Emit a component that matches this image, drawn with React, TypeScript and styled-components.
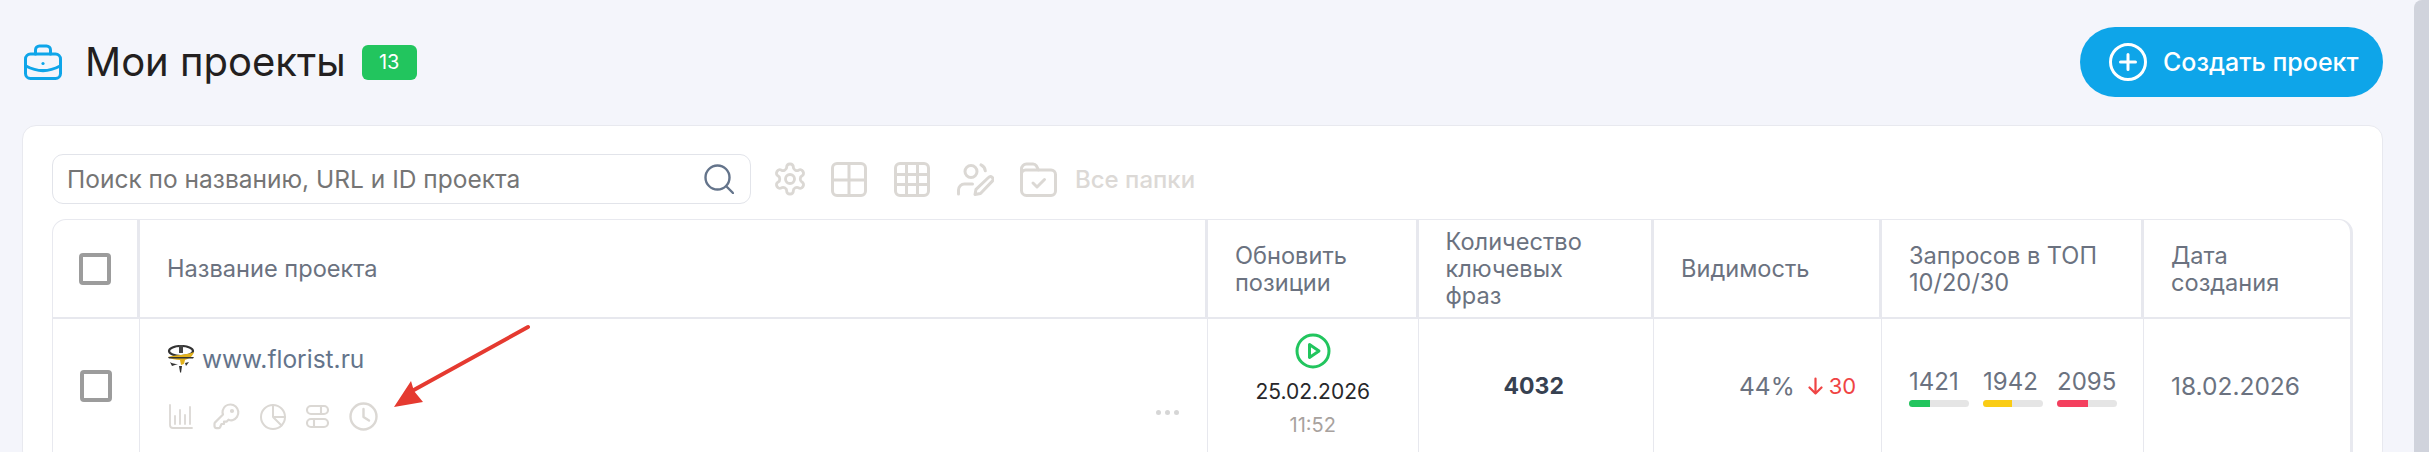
import React from "react";
import styled, { createGlobalStyle } from "styled-components";

const Global = createGlobalStyle`
  html, body { margin: 0; padding: 0; background: #f4f5fb; overflow: hidden; }
  * { box-sizing: border-box; }
  body { font-family: Inter, "Noto Sans", sans-serif; }
`;

const Page = styled.div`
  display: flex;
  width: 2429px;
  height: 452px;
  overflow: hidden;
  background: #f4f5fb;
  position: relative;
`;
const Main = styled.main`
  flex: 1;
  min-width: 0;
  padding: 27px 31px 0 22px;
`;
const ScrollThumb = styled.div`
  width: 15px;
  height: 470px;
  background: #d0d3dc;
  border-radius: 8px 0 0 8px;
`;
const PageHeader = styled.header`
  display: flex;
  align-items: center;
  justify-content: space-between;
  height: 70px;
  margin-bottom: 28px;
`;
const TitleGroup = styled.div`
  display: flex;
  align-items: center;
  padding-left: 2px;
`;
const Title = styled.h1`
  margin: 0 16px 0 23px;
  font-size: 40px;
  font-weight: 400;
  line-height: 48px;
  color: #231f20;
`;
const CountBadge = styled.span`
  width: 55px;
  height: 35px;
  border-radius: 6px;
  background: #22c55e;
  color: #fff;
  font-size: 20px;
  display: flex;
  align-items: center;
  justify-content: center;
`;
const CreateButton = styled.button`
  display: flex;
  align-items: center;
  gap: 16px;
  width: 303px;
  height: 70px;
  padding: 0 0 0 29px;
  border: 0;
  border-radius: 35px;
  background: #0ea5e9;
  color: #fff;
  font-family: inherit;
  font-size: 25px;
  font-weight: 500;
`;
const Card = styled.section`
  background: #fff;
  border: 1px solid #e8e9ef;
  border-radius: 14px;
  padding: 28px 29px 0 29px;
  height: 340px;
`;
const Toolbar = styled.div`
  display: flex;
  align-items: center;
  height: 50px;
  margin-bottom: 15px;
`;
const SearchBox = styled.div`
  width: 699px;
  height: 50px;
  border: 1px solid #e2e4ea;
  border-radius: 11px;
  display: flex;
  align-items: center;
  justify-content: space-between;
  padding: 0 16px 0 14px;
  margin-right: 21px;
`;
const SearchPlaceholder = styled.span`
  font-size: 24.5px;
  color: #757575;
`;
const ToolIcon = styled.span<{ $gap: number }>`
  display: flex;
  margin-right: ${(p) => p.$gap}px;
`;
const FolderLabel = styled.span`
  font-size: 24px;
  font-weight: 500;
  color: #dcd9d6;
`;
const Table = styled.div`
  display: grid;
  grid-template-columns: 87px 1068px 210.5px 235.5px 228px 262px 211px;
  grid-template-rows: 99px 160px;
  border: 1px solid #e8e9ef;
  border-right-width: 3px;
  border-radius: 14px 14px 0 0;
  overflow: hidden;
`;
const HeadCell = styled.div`
  display: flex;
  align-items: center;
  padding: 0 26px 0 27px;
  font-size: 23.6px;
  line-height: 27px;
  color: #6b7280;
  border-right: 3px solid #e7e8ee;
  border-bottom: 2px solid #e7e8ee;
  &:nth-child(7) { border-right: 0; }
`;
const HeadCheckCell = styled(HeadCell)`
  justify-content: center;
  padding: 0;
`;
const NarrowHead = styled(HeadCell)`
  padding-right: 60px;
`;
const BodyCell = styled.div`
  position: relative;
  display: flex;
  align-items: flex-start;
  border-right: 1px solid #e7e8ee;
  &:last-child { border-right: 0; }
`;
const CheckBox = styled.span`
  display: block;
  flex: none;
  width: 32px;
  height: 32px;
  border: 4px solid #9c9c9c;
  border-radius: 4px;
`;
const CheckCell = styled(BodyCell)`
  padding-top: 51px;
  justify-content: center;
`;
const NameCell = styled(BodyCell)`
  flex-direction: column;
  padding: 25px 0 0 27px;
`;
const SiteRow = styled.div`
  display: flex;
  align-items: center;
  gap: 7px;
  font-size: 24.5px;
  line-height: 30px;
  color: #64748b;
`;
const ActionRow = styled.div`
  display: flex;
  align-items: center;
  gap: 20px;
  margin-top: 28px;
  margin-left: 2px;
`;
const MoreDots = styled.div`
  position: absolute;
  right: 28px;
  top: 91px;
  display: flex;
  gap: 4px;
  & > i { width: 5px; height: 5px; border-radius: 50%; background: #d6d6d6; display: block; }
`;
const UpdateCell = styled(BodyCell)`
  flex-direction: column;
  align-items: center;
  padding-top: 14px;
`;
const DateText = styled.div`
  font-size: 21px;
  line-height: 26px;
  color: #27272a;
  margin-top: 10px;
`;
const TimeText = styled.div`
  font-size: 20px;
  line-height: 26px;
  color: #a8a29e;
  margin-top: 7px;
`;
const Phrases = styled(BodyCell)`
  justify-content: center;
  padding: 52px 4px 0 0;
  font-size: 23px;
  line-height: 30px;
  font-weight: 700;
  color: #374151;
`;
const VisibilityCell = styled(BodyCell)`
  padding: 52px 0 0 85px;
  gap: 13px;
`;
const Percent = styled.span`
  font-size: 24.5px;
  line-height: 30px;
  color: #6b7280;
`;
const Delta = styled.span`
  display: flex;
  align-items: center;
  gap: 6px;
  height: 30px;
  font-size: 22px;
  color: #ef4444;
`;
const TopCell = styled(BodyCell)`
  padding: 49px 0 0 27px;
  gap: 14px;
`;
const TopStat = styled.div`
  width: 60px;
  font-size: 24px;
  line-height: 28px;
  color: #6b7280;
  white-space: nowrap;
`;
const Bar = styled.div`
  height: 7px;
  border-radius: 4px;
  background: #e5e5e5;
  overflow: hidden;
  margin-top: 4px;
`;
const BarFill = styled.div<{ $color: string }>`
  height: 100%;
  background: ${(p) => p.$color};
`;
const CreatedCell = styled(BodyCell)`
  padding: 52px 0 0 27px;
  font-size: 24.5px;
  line-height: 30px;
  color: #6b7280;
`;
const ArrowLayer = styled.svg`
  position: absolute;
  left: 385px;
  top: 320px;
  pointer-events: none;
`;

const Line = styled.svg.attrs({ fill: "none", strokeLinecap: "round", strokeLinejoin: "round" })``;

const GREY = "#dbd8d4";

const Briefcase = () => (
  <Line width="38" height="36" viewBox="0 0 38 36" stroke="#0ea5e9" strokeWidth="3">
    <rect x="1.5" y="10" width="35" height="24.5" rx="5" />
    <path d="M11.5 10V6a4 4 0 0 1 4-4h7a4 4 0 0 1 4 4v4" />
    <path d="M2 22c11 6 23 6 34 0" />
    <circle cx="19" cy="19.5" r="1.6" fill="#0ea5e9" stroke="none" />
  </Line>
);
const PlusCircle = () => (
  <Line width="38" height="38" viewBox="0 0 38 38" stroke="#fff" strokeWidth="3">
    <circle cx="19" cy="19" r="17.5" />
    <path d="M19 11.5v15M11.5 19h15" />
  </Line>
);
const SearchIcon = () => (
  <Line width="30" height="30" viewBox="0 0 30 30" stroke="#64748b" strokeWidth="2.4">
    <circle cx="13.5" cy="13.5" r="12" />
    <path d="M23 23l6 6" />
  </Line>
);
const Gear = () => (
  <Line width="36" height="36" viewBox="0 0 24 24" stroke={GREY} strokeWidth="1.9">
    <path d="M12.22 2h-.44a2 2 0 0 0-2 2v.18a2 2 0 0 1-1 1.73l-.43.25a2 2 0 0 1-2 0l-.15-.08a2 2 0 0 0-2.73.73l-.22.38a2 2 0 0 0 .73 2.73l.15.1a2 2 0 0 1 1 1.72v.51a2 2 0 0 1-1 1.74l-.15.09a2 2 0 0 0-.73 2.73l.22.38a2 2 0 0 0 2.73.73l.15-.08a2 2 0 0 1 2 0l.43.25a2 2 0 0 1 1 1.73V20a2 2 0 0 0 2 2h.44a2 2 0 0 0 2-2v-.18a2 2 0 0 1 1-1.73l.43-.25a2 2 0 0 1 2 0l.15.08a2 2 0 0 0 2.73-.73l.22-.39a2 2 0 0 0-.73-2.73l-.15-.08a2 2 0 0 1-1-1.74v-.5a2 2 0 0 1 1-1.74l.15-.09a2 2 0 0 0 .73-2.73l-.22-.38a2 2 0 0 0-2.73-.73l-.15.08a2 2 0 0 1-2 0l-.43-.25a2 2 0 0 1-1-1.73V4a2 2 0 0 0-2-2z" />
    <circle cx="12" cy="12" r="3" />
  </Line>
);
const Grid4 = () => (
  <Line width="36" height="35" viewBox="0 0 36 35" stroke={GREY} strokeWidth="3">
    <rect x="1.5" y="1.5" width="33" height="32" rx="4.5" />
    <path d="M18 1.5v32M1.5 18h33" />
  </Line>
);
const Grid9 = () => (
  <Line width="36" height="35" viewBox="0 0 36 35" stroke={GREY} strokeWidth="3">
    <rect x="1.5" y="1.5" width="33" height="32" rx="4.5" />
    <path d="M12.5 1.5v32M23.5 1.5v32M1.5 12.5h33M1.5 22.5h33" />
  </Line>
);
const UserPen = () => (
  <Line width="37" height="33" viewBox="0 0 37 33" stroke={GREY} strokeWidth="3">
    <circle cx="14" cy="8.5" r="6" />
    <path d="M24 1.8c2.6 1.2 4 3.2 4.3 6" />
    <path d="M1.5 31v-4a6 6 0 0 1 6-6h8" />
    <path d="M31.5 14.5a2.6 2.6 0 0 1 3.8 3.6L23.5 30.5l-5.5 1 1-5.2z" />
  </Line>
);
const FolderCheck = () => (
  <Line width="37" height="35" viewBox="0 0 37 35" stroke={GREY} strokeWidth="3">
    <path d="M1.5 7a5 5 0 0 1 5-5h6.5a4 4 0 0 1 3.4 1.9L18.5 8H31a4.5 4.5 0 0 1 4.5 4.5V29a4.5 4.5 0 0 1-4.5 4.5H6.5A5 5 0 0 1 1.5 28.5z" />
    <path d="M1.5 12a4 4 0 0 1 4-4H18" />
    <path d="M13 21l4 4 7.5-7.5" />
  </Line>
);
const Favicon = () => (
  <svg width="28" height="28" viewBox="0 0 28 28">
    <ellipse cx="14" cy="6" rx="12" ry="5" fill="none" stroke="#333" strokeWidth="2.2" />
    <path d="M12 0h4v8h-4z" fill="#444" />
    <path d="M1 12c6-2 20-2 26-5-2 6-7 7-9 8l-1 4-3 1-1-5c-4 0-9-1-12-3z" fill="#e3b21c" />
    <path d="M1 12h26l-1 1.5H2zM3 17c3 2 7 2 8 2l-6 2zM18 18l4-1-3 4zM12 21h3l-1 7-1-1z" fill="#333" />
  </svg>
);
const Chart = () => (
  <Line width="24" height="25" viewBox="0 0 24 25" stroke={GREY} strokeWidth="1.8">
    <path d="M1 1v20a3 3 0 0 0 3 3h19" />
    <path d="M6 12v8M11 6v14M16 11v9M21 3v17" />
  </Line>
);
const KeyIcon = () => (
  <Line width="27" height="27" viewBox="0 0 27 27" stroke={GREY} strokeWidth="2.2">
    <path d="M17.5 1.5a8 8 0 0 1 2 15.7c-1.5.3-2.8 0-4-.5l-2 2h-2.5V21H8.500l-1.500 3.500a2 2 0 0 1-1.500.6H3.500a2 2 0 0 1-2-2v-2.300a2 2 0 0 1 .6-1.400L10 11.500c-.5-1.200-.6-2.600-.3-4a8 8 0 0 1 7.800-6z" />
    <circle cx="19" cy="8" r="1" />
  </Line>
);
const Pie = () => (
  <Line width="26" height="26" viewBox="0 0 26 26" stroke={GREY} strokeWidth="2">
    <circle cx="13" cy="13" r="12" />
    <path d="M13 1v12h12M13 13l8.500 8.500" />
  </Line>
);
const Toggles = () => (
  <Line width="23" height="25" viewBox="0 0 23 25" stroke={GREY} strokeWidth="2.1">
    <rect x="1" y="2" width="21" height="8" rx="4" />
    <rect x="1" y="15" width="21" height="8" rx="4" />
    <path d="M15 2v8M8 15v8" />
  </Line>
);
const ClockIcon = () => (
  <Line width="29" height="29" viewBox="0 0 29 29" stroke={GREY} strokeWidth="2.4">
    <circle cx="14.5" cy="14.5" r="13" />
    <path d="M14.5 7v8l5.500 3.500" />
  </Line>
);
const Play = () => (
  <Line width="36" height="36" viewBox="0 0 36 36" stroke="#22c55e" strokeWidth="3">
    <circle cx="18" cy="18" r="16" />
    <path d="M14.5 11.5l9.500 6.500-9.500 6.500z" />
  </Line>
);
const DownArrow = () => (
  <Line width="15" height="18" viewBox="0 0 15 18" stroke="#ef4444" strokeWidth="2.2">
    <path d="M7.5 1.5v15M1.5 10.500l6 6 6-6" />
  </Line>
);
const RedArrow = () => (
  <ArrowLayer width="150" height="95" viewBox="0 0 150 95">
    <path d="M143 7L27 71" stroke="#e53a30" strokeWidth="4" strokeLinecap="round" fill="none" />
    <path d="M9 87l17-26 3 10 9 11z" fill="#e53a30" />
  </ArrowLayer>
);

const stats = [
  { value: 1421, color: "#22c55e", fill: 35 },
  { value: 1942, color: "#facc15", fill: 48 },
  { value: 2095, color: "#f43f5e", fill: 52 },
];

export default function App() {
  return (
    <Page>
      <Global />
      <Main>
        <PageHeader>
          <TitleGroup>
            <Briefcase />
            <Title>Мои проекты</Title>
            <CountBadge>13</CountBadge>
          </TitleGroup>
          <CreateButton>
            <PlusCircle />
            Создать проект
          </CreateButton>
        </PageHeader>
        <Card>
          <Toolbar>
            <SearchBox>
              <SearchPlaceholder>Поиск по названию, URL и ID проекта</SearchPlaceholder>
              <SearchIcon />
            </SearchBox>
            <ToolIcon $gap={23}><Gear /></ToolIcon>
            <ToolIcon $gap={27}><Grid4 /></ToolIcon>
            <ToolIcon $gap={27}><Grid9 /></ToolIcon>
            <ToolIcon $gap={26}><UserPen /></ToolIcon>
            <ToolIcon $gap={18}><FolderCheck /></ToolIcon>
            <FolderLabel>Все папки</FolderLabel>
          </Toolbar>
          <Table>
            <HeadCheckCell><CheckBox /></HeadCheckCell>
            <HeadCell>Название проекта</HeadCell>
            <HeadCell>Обновить позиции</HeadCell>
            <NarrowHead>Количество ключевых фраз</NarrowHead>
            <HeadCell>Видимость</HeadCell>
            <HeadCell>Запросов в ТОП 10/20/30</HeadCell>
            <HeadCell>Дата создания</HeadCell>
            <CheckCell><CheckBox /></CheckCell>
            <NameCell>
              <SiteRow><Favicon />www.florist.ru</SiteRow>
              <ActionRow>
                <Chart />
                <KeyIcon />
                <Pie />
                <Toggles />
                <ClockIcon />
              </ActionRow>
              <MoreDots><i /><i /><i /></MoreDots>
            </NameCell>
            <UpdateCell>
              <Play />
              <DateText>25.02.2026</DateText>
              <TimeText>11:52</TimeText>
            </UpdateCell>
            <Phrases>4032</Phrases>
            <VisibilityCell>
              <Percent>44%</Percent>
              <Delta><DownArrow />30</Delta>
            </VisibilityCell>
            <TopCell>
              {stats.map((s) => (
                <TopStat key={s.value}>
                  {s.value}
                  <Bar><BarFill $color={s.color} style={{ width: `${s.fill}%` }} /></Bar>
                </TopStat>
              ))}
            </TopCell>
            <CreatedCell>18.02.2026</CreatedCell>
          </Table>
        </Card>
      </Main>
      <ScrollThumb />
      <RedArrow />
    </Page>
  );
}
